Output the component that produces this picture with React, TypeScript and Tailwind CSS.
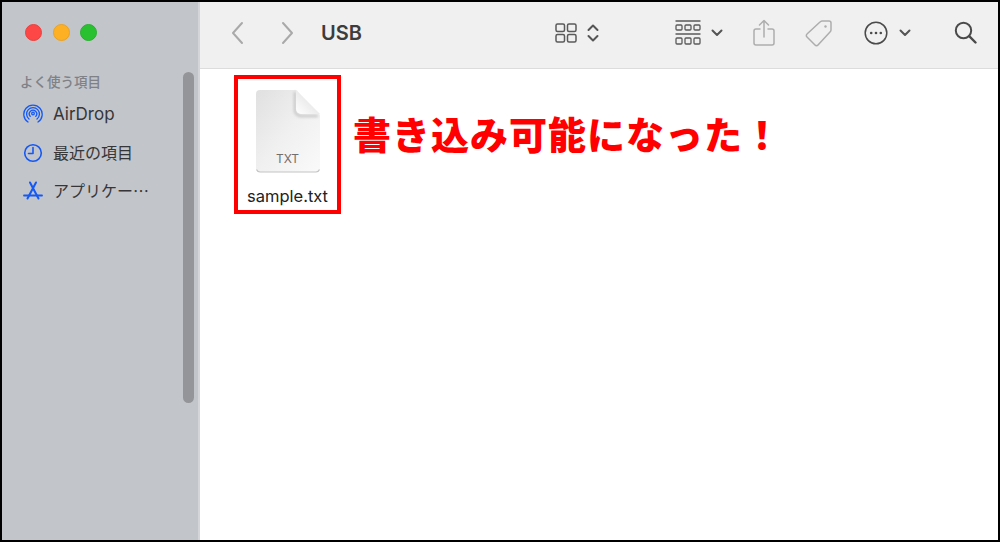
import React from 'react';

const FONT = "font-['Inter','Noto_Sans_CJK_JP',sans-serif]";

const Chevron: React.FC<{ flip?: boolean; className?: string }> = ({ flip, className }) => (
  <svg width="13" height="24" viewBox="0 0 13 24" fill="none" stroke="#a9a9a9" strokeWidth="2" strokeLinecap="round" strokeLinejoin="round" className={className}>
    <path d={flip ? 'M2 2l9 10-9 10' : 'M11 2L2 12l9 10'} />
  </svg>
);

const SmallDown: React.FC<{ className?: string }> = ({ className }) => (
  <svg width="12" height="8" viewBox="0 0 12 8" fill="none" stroke="#555" strokeWidth="2" strokeLinecap="round" strokeLinejoin="round" className={className}>
    <path d="M1.500 1.500L6 6l4.500-4.500" />
  </svg>
);

const GridIcon = () => (
  <svg width="22" height="20" viewBox="0 0 22 20" fill="none" stroke="#5a5a5a" strokeWidth="1.500">
    <rect x="1" y="1" width="8.500" height="7.500" rx="1.500" />
    <rect x="12.500" y="1" width="8.500" height="7.500" rx="1.500" />
    <rect x="1" y="11.500" width="8.500" height="7.500" rx="1.500" />
    <rect x="12.500" y="11.500" width="8.500" height="7.500" rx="1.500" />
  </svg>
);

const UpDown: React.FC<{ className?: string }> = ({ className }) => (
  <svg width="12" height="20" viewBox="0 0 12 20" fill="none" stroke="#555" strokeWidth="2" strokeLinecap="round" strokeLinejoin="round" className={className}>
    <path d="M1.500 7L6 2.500 10.500 7M1.500 13L6 17.500 10.500 13" />
  </svg>
);

const GroupIcon = () => (
  <svg width="26" height="26" viewBox="0 0 26 26" fill="none" stroke="#5a5a5a" strokeWidth="1.300">
    <path d="M0.500 1h25M0.500 14h25" strokeWidth="1.600" />
    <rect x="1" y="5" width="6" height="5" rx="1" />
    <rect x="10" y="5" width="6" height="5" rx="1" />
    <rect x="19" y="5" width="6" height="5" rx="1" />
    <rect x="1" y="18" width="6" height="6" rx="1" />
    <rect x="10" y="18" width="6" height="6" rx="1" />
    <rect x="19" y="18" width="6" height="6" rx="1" />
  </svg>
);

const ShareIcon = () => (
  <svg width="22" height="28" viewBox="0 0 22 28" fill="none" stroke="#adadad" strokeWidth="1.500" strokeLinecap="round" strokeLinejoin="round">
    <path d="M7 10H3a2 2 0 0 0-2 2v12a2 2 0 0 0 2 2h16a2 2 0 0 0 2-2V12a2 2 0 0 0-2-2h-4" />
    <path d="M11 18V2M6.500 6L11 1.500 15.500 6" />
  </svg>
);

const TagIcon = () => (
  <svg width="28" height="28" viewBox="0 0 28 28" fill="none" stroke="#adadad" strokeWidth="1.500" strokeLinejoin="round">
    <path d="M17 2h7a2 2 0 0 1 2 2v7a3 3 0 0 1-1 2L13 26a2 2 0 0 1-3 0L2 18a2 2 0 0 1 0-3L15 3a3 3 0 0 1 2-1z" />
    <circle cx="20.500" cy="7.500" r="1.200" fill="#adadad" stroke="none" />
  </svg>
);

const MoreIcon = () => (
  <svg width="24" height="24" viewBox="0 0 24 24" fill="none" stroke="#4a4a4a" strokeWidth="1.500">
    <circle cx="12" cy="12" r="10.800" />
    <circle cx="7.200" cy="12" r="1.300" fill="#4a4a4a" stroke="none" />
    <circle cx="12" cy="12" r="1.300" fill="#4a4a4a" stroke="none" />
    <circle cx="16.800" cy="12" r="1.300" fill="#4a4a4a" stroke="none" />
  </svg>
);

const SearchIcon = () => (
  <svg width="23" height="23" viewBox="0 0 23 23" fill="none" stroke="#4a4a4a" strokeWidth="2" strokeLinecap="round">
    <circle cx="9.500" cy="9.500" r="7.700" />
    <path d="M15.200 15.200L21.500 21.500" strokeWidth="2.400" />
  </svg>
);

const AirDropIcon = () => (
  <svg width="20" height="20" viewBox="0 0 20 20" fill="none" stroke="#1458f5" strokeWidth="1.300" strokeLinecap="round">
    <path d="M5 18a9.200 9.200 0 1 1 10 0" />
    <path d="M6 15a6.400 6.400 0 1 1 8 0" />
    <path d="M7.200 12.400a3.700 3.700 0 1 1 5.600 0" />
    <circle cx="10" cy="9.500" r="1.300" />
  </svg>
);

const ClockIcon = () => (
  <svg width="20" height="20" viewBox="0 0 20 20" fill="none" stroke="#1458f5" strokeWidth="1.600" strokeLinecap="round" strokeLinejoin="round">
    <circle cx="10" cy="10" r="8.300" />
    <path d="M10 4.500V10.500H5.500" />
  </svg>
);

const AppsIcon = () => (
  <svg width="20" height="20" viewBox="0 0 20 20" fill="none" stroke="#1458f5" strokeWidth="2" strokeLinecap="round">
    <path d="M7 1.500L15.500 17.500M13 1.500L4.500 17.500" />
    <path d="M1 14.500h18" strokeWidth="1.800" />
  </svg>
);

const FileIcon = () => (
  <div className="relative w-[66px] h-[85px]">
    <svg width="66" height="85" viewBox="0 0 66 85">
      <defs>
        <linearGradient id="page" x1="0" y1="0" x2="1" y2="1">
          <stop offset="0" stopColor="#e0e0e0" />
          <stop offset="0.5" stopColor="#f0f0f0" />
          <stop offset="1" stopColor="#fafafa" />
        </linearGradient>
        <linearGradient id="fold" x1="0" y1="1" x2="1" y2="0">
          <stop offset="0" stopColor="#ffffff" />
          <stop offset="1" stopColor="#d8d8d8" />
        </linearGradient>
        <filter id="soft" x="-30%" y="-30%" width="160%" height="160%">
          <feGaussianBlur stdDeviation="1.500" />
        </filter>
      </defs>
      <path d="M5 1h36l24 25v53a4 4 0 0 1-4 4H5a4 4 0 0 1-4-4V5a4 4 0 0 1 4-4z" fill="url(#page)" />
      <path d="M1.500 80.500a4 4 0 0 0 3.500 2.500h56a4 4 0 0 0 3.500-2.500" fill="none" stroke="#c4c4c4" strokeWidth="1.200" />
      <path d="M40 3v18a6 6 0 0 0 6 6h17" fill="none" stroke="#bcbcbc" strokeWidth="2" filter="url(#soft)" />
      <path d="M41 1v19a5 5 0 0 0 5 5h19z" fill="url(#fold)" />
    </svg>
    <span className="absolute left-0 right-0 top-[62px] text-center text-[12px] leading-[15px] text-[#6f6f6f]">TXT</span>
  </div>
);

const SidebarItem: React.FC<{ icon: React.ReactNode; label: string; labelClass: string }> = ({ icon, label, labelClass }) => (
  <li className="flex items-center h-[38.500px]">
    <span className="w-[30px] flex">{icon}</span>
    <span className={`${labelClass} text-[#363638] whitespace-nowrap`}>{label}</span>
  </li>
);

const App: React.FC = () => {
  return (
    <div className={`${FONT} flex w-[1000px] h-[542px] border-2 border-black bg-white overflow-hidden`}>
      <aside className="relative w-[198px] shrink-0 bg-[#c2c5ca] border-r-2 border-[#d4d5d9]">
        <div className="flex gap-[10.500px] pt-[22px] pl-[23px]">
          <span className="w-[17px] h-[17px] rounded-full bg-[#fd4646] border border-[#e8423f]" />
          <span className="w-[17px] h-[17px] rounded-full bg-[#fdb024] border border-[#e8a224]" />
          <span className="w-[17px] h-[17px] rounded-full bg-[#2ac131] border border-[#27b02e]" />
        </div>
        <p className="mt-[32px] pl-[18px] text-[13.500px] leading-[18px] font-medium text-[#7f8186]">よく使う項目</p>
        <ul className="mt-[4px] pl-[21px]">
          <SidebarItem icon={<AirDropIcon />} label="AirDrop" labelClass="text-[17px]" />
          <SidebarItem icon={<ClockIcon />} label="最近の項目" labelClass="text-[16px]" />
          <SidebarItem icon={<AppsIcon />} label="アプリケー⋯" labelClass="text-[16px]" />
        </ul>
        <div className="absolute left-[181px] top-[70px] w-[11px] h-[331px] rounded-full bg-[#939598]" />
      </aside>

      <div className="flex-1 flex flex-col min-w-0">
        <header className="h-[67px] shrink-0 flex items-center pb-[5px] bg-[#f0f0f0] border-b border-[#dcdcdc]">
          <Chevron className="ml-[31px]" />
          <Chevron flip className="ml-[37px]" />
          <h1 className="ml-[27px] w-[234px] text-[20px] font-semibold text-[#3c3c3e]">USB</h1>
          <GridIcon />
          <UpDown className="ml-[10px]" />
          <div className="ml-[76px] flex items-center"><GroupIcon /></div>
          <SmallDown className="ml-[10px]" />
          <div className="ml-[30px] flex"><ShareIcon /></div>
          <div className="ml-[30px] flex"><TagIcon /></div>
          <div className="ml-[31px] flex"><MoreIcon /></div>
          <SmallDown className="ml-[11px]" />
          <div className="ml-[43px] flex"><SearchIcon /></div>
        </header>

        <main className="flex-1 flex items-start pl-[34px] pt-[6px]">
          <div className="w-[107px] h-[139px] border-[4px] border-[#ff0000] flex flex-col items-center pt-[10px]">
            <FileIcon />
            <span className="mt-[12px] text-[16.500px] leading-[20px] text-[#222]">sample.txt</span>
          </div>
          <p className="ml-[12px] mt-[33px] text-[38px] leading-[54px] font-black text-[#ff0000] whitespace-nowrap tracking-[1px]">書き込み可能になった！</p>
        </main>
      </div>
    </div>
  );
};

export default App;
